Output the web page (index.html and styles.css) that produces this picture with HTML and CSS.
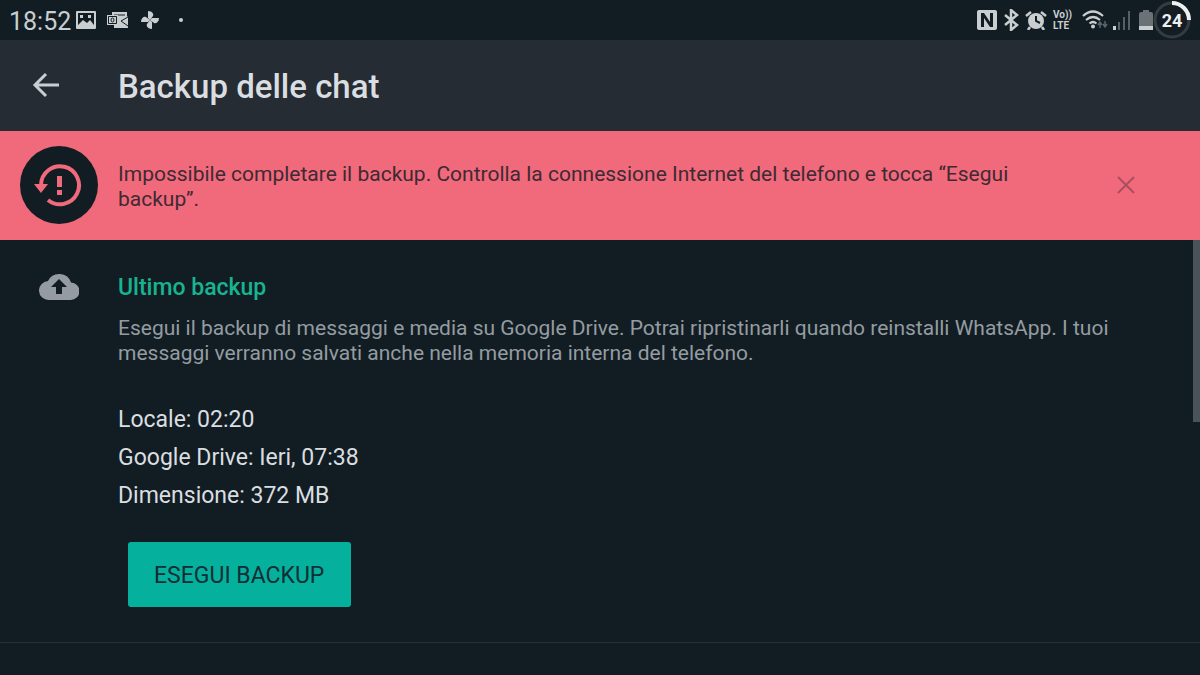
FILE: index.html
```html
<!DOCTYPE html>
<html lang="it">
<head>
<meta charset="utf-8">
<meta name="viewport" content="width=device-width, initial-scale=1">
<title>Backup delle chat</title>
<link rel="stylesheet" href="styles.css">
</head>
<body>
<div class="status">
  <time class="clock">18:52</time>
  <div class="notifications">
    <svg width="20" height="20" viewBox="0 0 20 20" aria-hidden="true"><path fill="currentColor" fill-rule="evenodd" d="M1 1h18q1 0 1 1v16q0 1-1 1H1q-1 0-1-1V2q0-1 1-1zM2 3v12l5-5 4 3 3-3 4 5V3zM4 5h3v3H4zM12 5h3v3h-3z"/></svg>
    <svg width="22" height="18" viewBox="0 0 22 18" aria-hidden="true"><path fill="currentColor" d="M5 1h15v4l1 1v11H7v-3H5z"/><path d="M7 4h11M21 6l-7 4 7 5" fill="none" stroke="#121d23"/><path fill="currentColor" d="M0 4h11v10H0z"/><path d="M1.500 5.500h8v7h-8z" fill="none" stroke="#121d23"/><ellipse cx="5.500" cy="9" rx="1.500" ry="2" fill="none" stroke="#121d23"/></svg>
    <svg width="20" height="20" viewBox="0 0 20 20" aria-hidden="true"><g fill="currentColor"><path id="blade" d="M10 10L8 8V1c4 0 6 3 5 5z"/><use href="#blade" transform="rotate(90 10 10)"/><use href="#blade" transform="rotate(180 10 10)"/><use href="#blade" transform="rotate(270 10 10)"/></g></svg>
    <i class="dot"></i>
  </div>
  <div class="system">
    <svg width="20" height="20" viewBox="0 0 20 20" aria-hidden="true"><path fill="currentColor" d="M2 0h16q2 0 2 2v16q0 2-2 2H2q-2 0-2-2V2q0-2 2-2z"/><path d="M4 17V3h3l6 9V3h3v14h-3L7 8v9z" fill="#121d23"/></svg>
    <svg width="16" height="22" viewBox="0 0 16 22" aria-hidden="true"><path d="M2 6l12 10-6 5V1l6 5L2 16" fill="none" stroke="currentColor" stroke-width="2.500"/></svg>
    <svg width="22" height="20" viewBox="0 0 22 20" aria-hidden="true"><circle cx="11" cy="11" r="8" fill="currentColor"/><path d="M1 6l5-4M21 6l-5-4M5 17l-2 3M17 17l2 3" stroke="currentColor" stroke-width="2.500"/><path d="M11 6v5l4 2" fill="none" stroke="#121d23" stroke-width="2"/></svg>
    <span class="volte"><span>Vo))</span><span>LTE</span></span>
    <svg class="wifi" width="27" height="20" viewBox="0 0 27 20" aria-hidden="true"><g fill="none" stroke="currentColor" stroke-width="2.200"><path d="M1 6q10-9 20 0M4 10q7-6 14 0M7.500 13.500q3.500-3 7 0"/></g><circle cx="11" cy="16.500" r="2" fill="currentColor"/><path d="M18 18v-6m-2 3l2-3 2 3M23 11v6m-2-3l2 3 2-3" fill="none" stroke="#59636a" stroke-width="1.500"/></svg>
    <svg width="20" height="20" viewBox="0 0 20 20" aria-hidden="true"><path d="M0 16h3v4H0z" fill="currentColor"/><path d="M5 12h2v8H5zM10 7h2v13h-2zM15 1h2v19h-2z" fill="#536068"/></svg>
    <svg width="14" height="20" viewBox="0 0 14 20" aria-hidden="true"><path d="M4 0h6v2h2q2 0 2 2v12H0V4q0-2 2-2h2z" fill="#6a7277"/><path d="M0 16h14v4H0z" fill="currentColor"/></svg>
    <span class="level"><svg width="38" height="38" viewBox="0 0 38 38" aria-hidden="true"><circle cx="19" cy="19" r="17" fill="#151c22" stroke="#323c43" stroke-width="3"/><path d="M19 2a17 17 0 0 1 17 17" fill="none" stroke="#edf0f1" stroke-width="4"/></svg><b>24</b></span>
  </div>
</div>
<header class="bar">
  <button class="icon-button back" aria-label="Indietro"><svg width="28" height="28" viewBox="0 0 28 28"><path d="M27 14H3M14 3L3 14l11 11" fill="none" stroke="currentColor" stroke-width="3"/></svg></button>
  <h1>Backup delle chat</h1>
</header>
<section class="alert" role="alert">
  <svg class="alert-icon" width="78" height="78" viewBox="0 0 78 78" aria-hidden="true"><circle cx="39" cy="39" r="39" fill="#121d23"/><path d="M21 39A19 19 0 1 1 28 54" fill="none" stroke="#f06a7c" stroke-width="4"/><path d="M14 38h14l-7 9z" fill="#f06a7c"/><path d="M37 30h5v11h-5zM37 44h5v5h-5z" fill="#f06a7c"/></svg>
  <p>Impossibile completare il backup. Controlla la connessione Internet del telefono e tocca “Esegui backup”.</p>
  <button class="icon-button close" aria-label="Chiudi"><svg width="20" height="20" viewBox="0 0 20 20"><path d="M2 2l16 16M18 2L2 18" stroke="currentColor" stroke-width="2"/></svg></button>
</section>
<main class="content">
  <section class="backup">
    <svg class="cloud" width="40" height="28" viewBox="0 0 40 28" aria-hidden="true"><path fill="#949ca1" fill-rule="evenodd" d="M32 9.500A12.500 12.500 0 0 0 9 8a9.500 9.500 0 0 0 1 19h21.500a8.750 8.750 0 0 0 .5-17.500zM23 14v7h-6v-7h-5l8-8 8 8z"/></svg>
    <div class="details">
      <h2>Ultimo backup</h2>
      <p class="description">Esegui il backup di messaggi e media su Google Drive. Potrai ripristinarli quando reinstalli WhatsApp. I tuoi messaggi verranno salvati anche nella memoria interna del telefono.</p>
      <ul class="facts">
        <li>Locale: 02:20</li>
        <li>Google Drive: Ieri, 07:38</li>
        <li>Dimensione: 372 MB</li>
      </ul>
      <button class="run">ESEGUI BACKUP</button>
    </div>
  </section>
  <div class="scrollbar"></div>
</main>
</body>
</html>
```
FILE: styles.css
```css
* { box-sizing: border-box; }
body {
  margin: 0;
  min-height: 100vh;
  display: flex;
  flex-direction: column;
  background: #121d23;
  color: #dadee0;
  font: 23px/25px Roboto, sans-serif;
}
h1, h2, p, ul { margin: 0; padding: 0; }
svg { display: block; flex: none; }
button { font: inherit; border: 0; cursor: pointer; }
.status {
  display: flex;
  align-items: center;
  height: 40px;
  padding-left: 9px;
  color: #c9ced1;
}
.clock { width: 67px; padding-top: 2px; font-size: 25px; }
.notifications { display: flex; align-items: center; gap: 11px; }
.dot { width: 4px; height: 4px; margin-left: 8px; border-radius: 50%; background: currentColor; }
.system { display: flex; align-items: center; gap: 6px; margin-left: auto; padding-right: 9px; }
.volte { display: flex; flex-direction: column; width: 21px; margin-right: 2px; font-size: 10px; line-height: 11px; font-weight: 700; }
.wifi { margin-right: -2px; }
.level { display: grid; place-items: center; margin-left: -6px; color: #edf0f1; font-size: 18px; }
.level > * { grid-area: 1 / 1; }
.bar {
  display: flex;
  align-items: center;
  padding: 25px 32px 26px;
  background: #252c34;
}
.icon-button { padding: 0; background: none; }
.back { width: 86px; color: #c9ced1; }
h1 { padding-top: 4px; font-size: 33px; line-height: 36px; font-weight: 500; }
.alert {
  display: flex;
  align-items: center;
  padding: 15px 64px 16px 20px;
  background: #f06a7c;
  color: #402932;
}
.alert-icon { margin-right: 20px; }
.alert p { flex: 1; padding: 4px 72px 0 0; font-size: 21px; }
.close { color: #a94f60; }
.content { position: relative; flex: 1; }
.backup {
  display: flex;
  padding: 33px 60px 35px 39px;
  border-bottom: 1px solid #263137;
}
.cloud { width: 40px; margin-right: 39px; }
.details { flex: 1; }
h2 { padding-top: 2px; font-size: 23px; line-height: 25px; font-weight: 500; color: #19b391; }
.description { margin-top: 16px; color: #949ca1; font-size: 21px; }
.facts { margin-top: 35px; list-style: none; line-height: 38px; }
.run {
  display: block;
  margin: 27px 0 0 10px;
  padding: 21px 27px 19px 26px;
  border-radius: 3px;
  background: #05b19c;
  color: #102e36;
}
.scrollbar {
  position: absolute;
  top: 0;
  right: 0;
  width: 7px;
  height: 182px;
  background: #495359;
}
```
